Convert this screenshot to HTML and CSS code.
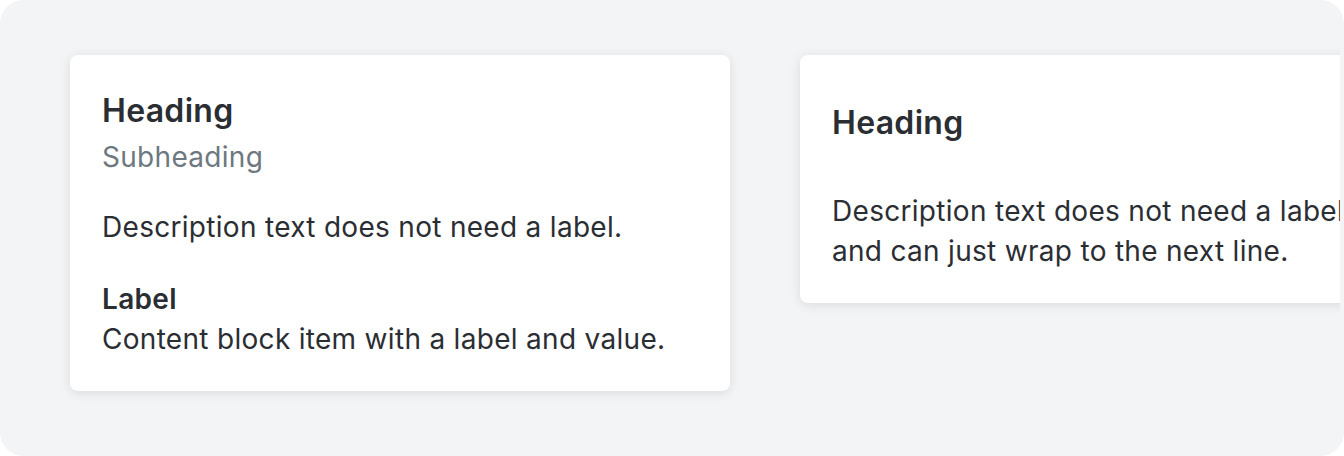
FILE: index.html
```html
<!DOCTYPE html>
<html lang="en">
<head>
<meta charset="UTF-8">
<meta name="viewport" content="width=device-width, initial-scale=1.0">
<title>Content cards</title>
<link rel="stylesheet" href="styles.css">
</head>
<body>
<div class="frame">
  <div class="track">
    <div class="card">
      <h2 class="card-heading">Heading</h2>
      <p class="card-sub">Subheading</p>
      <p class="card-text">Description text does not need a label.</p>
      <div class="card-item">
        <p class="item-label">Label</p>
        <p class="item-value">Content block item with a label and value.</p>
      </div>
    </div>

    <div class="card card-simple">
      <h2 class="card-heading">Heading</h2>
      <p class="card-text">Description text does not need a label and can just wrap to the next line.</p>
    </div>
  </div>
</div>
</body>
</html>
```

FILE: styles.css
```css
/* Content cards */

body {
    margin: 0;
    background-color: #fff;
    font-family: 'Inter', 'Noto Sans', sans-serif;
    letter-spacing: 0.3px;
    color: #2a2e33;
}

.frame {
    height: 456px;
    background-color: #f3f4f6;
    border-radius: 24px;
    overflow: hidden;
}

.track {
    display: flex;
    align-items: flex-start;
    gap: 70px;
    height: 100%;
    margin-right: 4px;
    padding: 55px 0 0 70px;
    box-sizing: border-box;
    overflow: hidden;
}

.card {
    flex: 0 0 660px;
    box-sizing: border-box;
    padding: 36px 32px 32px;
    background-color: #fff;
    border-radius: 8px;
    box-shadow: 0 2px 12px rgba(0, 0, 0, 0.1);
}

.card-heading {
    margin: 0;
    font-size: 32px;
    line-height: 40px;
    font-weight: 600;
}

.card-sub {
    margin: 6px 0 0;
    font-size: 28px;
    line-height: 40px;
    color: #6d7880;
}

.card-text {
    margin: 30px 0 0;
    font-size: 28px;
    line-height: 40px;
}

.card-item {
    margin-top: 32px;
}

.item-label {
    margin: 0;
    font-size: 28px;
    line-height: 40px;
    font-weight: 600;
}

.item-value {
    margin: 0;
    font-size: 28px;
    line-height: 40px;
}

.card-simple {
    padding-top: 48px;
}

.card-simple .card-text {
    margin-top: 48px;
    max-width: 540px;
}
```
